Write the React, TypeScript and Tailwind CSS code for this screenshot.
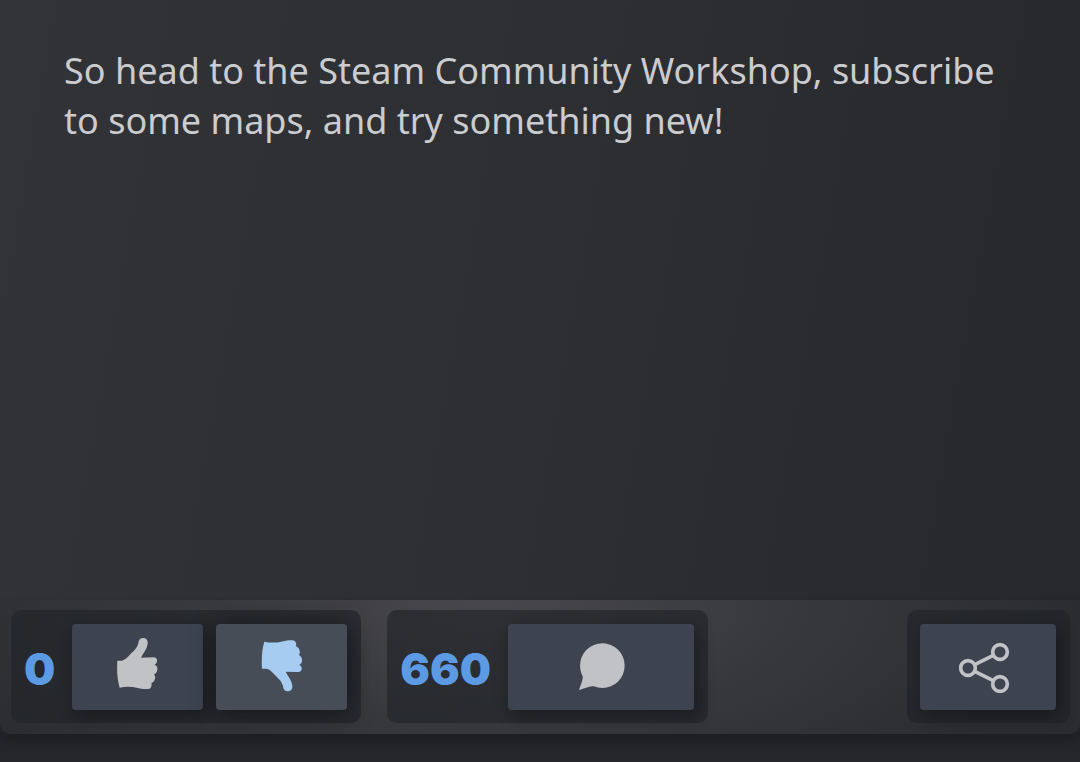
import type { ReactNode } from "react";

const THUMB_PATH =
  "M37 106L51 106Q60 104 69 94C82 80 97 70 100 53C101 43 106 38 114 38C124 38 129 45 128 55C126 72 114 84 108 97L145 96C154 96 157 102 156 108C155 114 152 116 149 118C157 122 158 128 157 134C155 142 152 145 147 147C152 152 151 158 149 163C147 169 143 171 139 173C141 180 139 186 134 190C124 193 106 190 95 187C80 184 62 183 44 187C37 165 35 135 37 106Z";

function ThumbUpIcon() {
  return (
    <svg viewBox="36 38 123 174" className="h-[58px] w-[41px]" fill="currentColor" aria-hidden="true">
      <path d={THUMB_PATH} />
    </svg>
  );
}

function ThumbDownIcon() {
  return (
    <svg viewBox="34 38 123 162" className="h-[54px] w-[41px]" fill="currentColor" aria-hidden="true">
      <path d={THUMB_PATH} transform="matrix(1 0 0 -1 0 230)" />
    </svg>
  );
}

function CommentIcon() {
  return (
    <svg viewBox="36 36 144 150" className="h-[50px] w-[48px]" fill="currentColor" aria-hidden="true">
      <circle cx="112" cy="107" r="67" />
      <path d="M53 136C55 149 47 164 42 180C58 176 73 169 89 168Z" />
    </svg>
  );
}

function ShareIcon() {
  return (
    <svg
      viewBox="237 153 174 156"
      className="h-[52px] w-[58px]"
      fill="none"
      stroke="currentColor"
      strokeWidth="11"
      aria-hidden="true"
    >
      <circle cx="264" cy="234" r="22" />
      <circle cx="360" cy="186" r="22" />
      <circle cx="360" cy="282" r="22" />
      <path d="M284 224L340 196M284 244L340 272" />
    </svg>
  );
}

function Panel({ children }: { children: ReactNode }) {
  return (
    <div className="flex items-center rounded-[10px] bg-[#202428]/65 pt-[14px] pr-[14px] pb-[13px] pl-[13px]">
      {children}
    </div>
  );
}

function Count({ value, label }: { value: number; label: string }) {
  return (
    <span className="mr-[17px] pt-1 text-[44px] leading-none font-black text-[#5c9be4]" aria-label={label}>
      {value}
    </span>
  );
}

const BUTTON =
  "flex h-[86px] items-center justify-center rounded-[4px] bg-[#3d434f] text-[#c0c2c6] shadow-[4px_6px_16px_rgba(10,12,16,0.45)]";

export default function App() {
  return (
    <div className="flex min-h-screen flex-col bg-[#222429] font-['Inter',sans-serif]">
      <main className="flex-1 bg-linear-[100deg,#323337_0%,#2d2e32_55%,#27282c_100%] px-16 pt-[46px]">
        <p className="font-['Noto_Sans',sans-serif] text-[36px] leading-[50px] text-[#cbccd0]">
          So head to the Steam Community Workshop, subscribe to some maps, and try something new!
        </p>
      </main>
      <footer className="bg-linear-to-b from-[#1e2024] to-[#25272c] pb-7">
        <div className="flex rounded-b-[10px] bg-[#2b2c30] bg-[radial-gradient(ellipse_55%_180%_at_45%_0%,#48484c_0%,#38393d_50%,#2b2c30_100%)] pt-[10px] pr-[10px] pb-[11px] pl-[11px] shadow-[0_8px_12px_rgba(0,0,0,0.2)]">
          <Panel>
            <Count value={0} label="0 likes" />
            <div className="flex gap-[13px]">
              <button type="button" aria-label="Like" className={`${BUTTON} w-[131px]`}>
                <ThumbUpIcon />
              </button>
              <button
                type="button"
                aria-label="Dislike"
                aria-pressed="true"
                className="flex h-[86px] w-[131px] items-center justify-center rounded-[4px] bg-[#474d57] text-[#a6ccf2] shadow-[2px_2px_24px_rgba(10,12,16,0.7)]"
              >
                <ThumbDownIcon />
              </button>
            </div>
          </Panel>
          <div className="ml-[26px] flex">
            <Panel>
              <Count value={660} label="660 comments" />
              <button type="button" aria-label="Comments" className={`${BUTTON} w-[186px]`}>
                <CommentIcon />
              </button>
            </Panel>
          </div>
          <div className="ml-auto flex">
            <Panel>
              <button type="button" aria-label="Share" className={`${BUTTON} w-[136px]`}>
                <ShareIcon />
              </button>
            </Panel>
          </div>
        </div>
      </footer>
    </div>
  );
}
